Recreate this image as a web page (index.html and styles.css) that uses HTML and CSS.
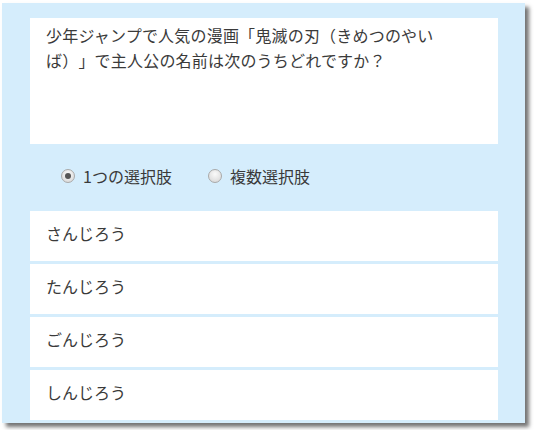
FILE: index.html
```html
<!DOCTYPE html>
<html lang="ja">
<head>
  <meta charset="UTF-8">
  <title>クイズ</title>
  <link rel="stylesheet" href="styles.css">
</head>
<body>
<div class="page">
  <section class="quiz">
    <div class="quiz-question">
      <p class="quiz-text">少年ジャンプで人気の漫画「鬼滅の刃（きめつのやいば）」で主人公の名前は次のうちどれですか？</p>
    </div>
    <div class="quiz-mode">
      <label class="mode"><input class="mode-radio" type="radio" name="mode" checked> 1つの選択肢</label>
      <label class="mode"><input class="mode-radio" type="radio" name="mode"> 複数選択肢</label>
    </div>
    <ul class="quiz-options">
      <li class="option">さんじろう</li>
      <li class="option">たんじろう</li>
      <li class="option">ごんじろう</li>
      <li class="option">しんじろう</li>
    </ul>
  </section>
</div>
</body>
</html>
```

FILE: styles.css
```css
body {
  margin: 0;
  background-color: #fff;
  font-family: "Noto Sans CJK JP", "Noto Sans", sans-serif;
  font-size: 16px;
  color: #3a3a3a;
  text-spacing-trim: space-all;
}
.page {
  padding: 3px 0 7px 2px;
}
.quiz {
  width: 523px;
  height: 420px;
  box-sizing: border-box;
  padding: 15px 27px 3px 28px;
  background-color: #d5edfc;
  box-shadow: 4px 4px 4px rgba(0, 0, 0, .55);
  display: flex;
  flex-direction: column;
}
.quiz-question {
  height: 126px;
  flex-shrink: 0;
  background-color: #fff;
  padding: 5px 16px;
  box-sizing: border-box;
}
.quiz-text {
  margin: 0;
  max-width: 396px;
  line-height: 25px;
  letter-spacing: .2px;
}
.quiz-mode {
  height: 67px;
  flex-shrink: 0;
  box-sizing: border-box;
  padding: 0 0 4px 31px;
  display: flex;
  align-items: center;
  gap: 36px;
}
.mode {
  display: flex;
  align-items: center;
  gap: 6px;
}
.mode-radio {
  -webkit-appearance: none;
  appearance: none;
  width: 14px;
  height: 14px;
  margin: 0 2px 0 0;
  border: 1px solid #a9a9a9;
  border-radius: 50%;
  background: radial-gradient(circle at 50% 35%, #fafafa, #d4d4d4);
  box-sizing: border-box;
  position: relative;
}
.mode-radio:checked::after {
  content: '';
  position: absolute;
  left: 3px; top: 3px;
  width: 6px;
  height: 6px;
  border-radius: 50%;
  background-color: #555;
}
.quiz-options {
  list-style: none;
  margin: 0;
  padding: 0;
  display: flex;
  flex-direction: column;
  gap: 3px;
}
.option {
  height: 50px;
  box-sizing: border-box;
  background-color: #fff;
  padding: 0 16px 6px;
  display: flex;
  align-items: center;
}
```
